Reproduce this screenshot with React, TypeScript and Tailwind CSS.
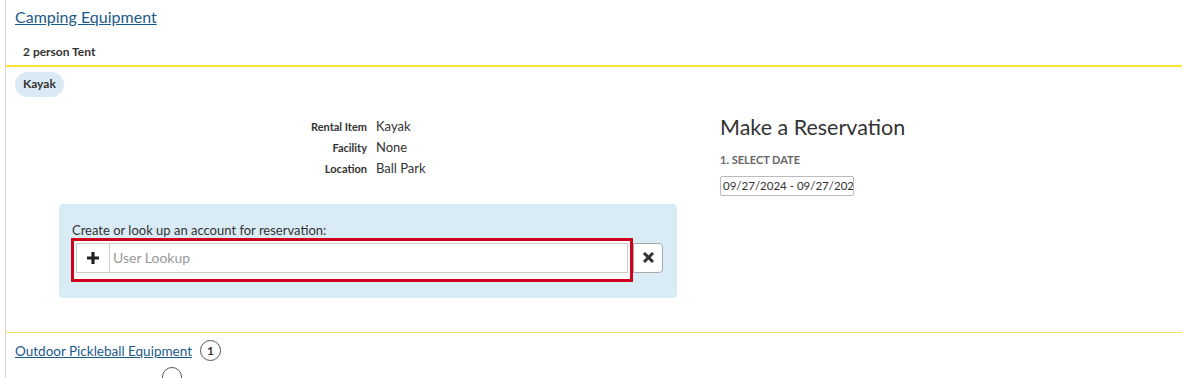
import React from "react";

export default function App() {
  return (
    <div className="w-[1182px] h-[378px] overflow-hidden bg-white text-[#333]" style={{ fontFamily: "Lato, 'Noto Sans', sans-serif" }}>
      <div className="ml-[5px] border-l border-[#d6d6d6] h-[378px]">
        <div className="pl-[9px] pt-[5px] h-[65px]">
          <a className="text-[16px] text-[#1a5a8a] underline leading-[20px]">Camping Equipment</a>
          <div className="pl-[8px] mt-[16px] text-[12px] font-bold leading-[14px] text-[#333]">2 person Tent</div>
        </div>
        <div className="border-t-2 border-b border-t-[#fce531] border-b-[#f7e56a] h-[268px]">
          <div className="pl-[9px] pt-[3px]">
            <span className="inline-flex items-center h-[25px] px-[8px] rounded-full bg-[#d9eaf4] text-[12px] font-bold text-[#333]">Kayak</span>
          </div>
          <div className="flex">
            <div className="w-[714px]">
              <div className="grid grid-cols-[361px_1fr] gap-x-[9px] mt-[19px] text-[13px] leading-[21px]">
                <div className="text-right text-[11px] font-bold">Rental Item</div><div>Kayak</div>
                <div className="text-right text-[11px] font-bold">Facility</div><div>None</div>
                <div className="text-right text-[11px] font-bold">Location</div><div>Ball Park</div>
              </div>
              <div className="ml-[53px] mt-[25px] w-[618px] h-[94px] bg-[#d9ecf5] rounded-[4px] pl-[13px] pt-[18px]">
                <div className="text-[13px] leading-[16px] text-[#333]">Create or look up an account for reservation:</div>
                <div className="flex items-start">
                  <div className="w-[562px] h-[44px] border-[3px] border-[#d0021b] p-[2px] bg-white flex -ml-[1px]">
                    <div className="w-[34px] h-[30px] border border-[#ccc] flex items-center justify-center bg-white">
                      <svg width="14" height="14" viewBox="0 0 14 14"><path d="M7 1v12M1 7h12" stroke="#222" strokeWidth="3.2" /></svg>
                    </div>
                    <div className="flex-1 h-[30px] border border-l-0 border-[#ccc] flex items-center pl-[3px] text-[14px] text-[#999]">User Lookup</div>
                  </div>
                  <div className="w-[30px] h-[30px] mt-[5px] border border-[#aaa] rounded-r-[4px] bg-white flex items-center justify-center">
                    <svg width="13" height="13" viewBox="0 0 13 13"><path d="M2 2l9 9M11 2l-9 9" stroke="#333" strokeWidth="3" /></svg>
                  </div>
                </div>
              </div>
            </div>
            <div className="pt-[16px]">
              <div className="text-[21.5px] leading-[28px] text-[#333]">Make a Reservation</div>
              <div className="mt-[12px] text-[11px] font-bold text-[#666] leading-[14px]">1. SELECT DATE</div>
              <div className="mt-[9px] w-[134px] h-[20px] border border-[#bbb] rounded-[2px] text-[11.5px] leading-[18px] pl-[2px] overflow-hidden whitespace-nowrap text-[#333]">09/27/2024 - 09/27/202</div>
            </div>
          </div>
        </div>
        <div className="pl-[9px] pt-[7px] flex items-center gap-[8px]">
          <a className="text-[13.5px] text-[#1a5a8a] underline leading-[18px]">Outdoor Pickleball Equipment</a>
          <span className="w-[21px] h-[21px] rounded-full border border-[#555] flex items-center justify-center text-[12px] font-bold">1</span>
        </div>
        <div className="ml-[156px] mt-[6px] w-[20px] h-[20px] rounded-full border border-[#555]"></div>
      </div>
    </div>
  );
}
